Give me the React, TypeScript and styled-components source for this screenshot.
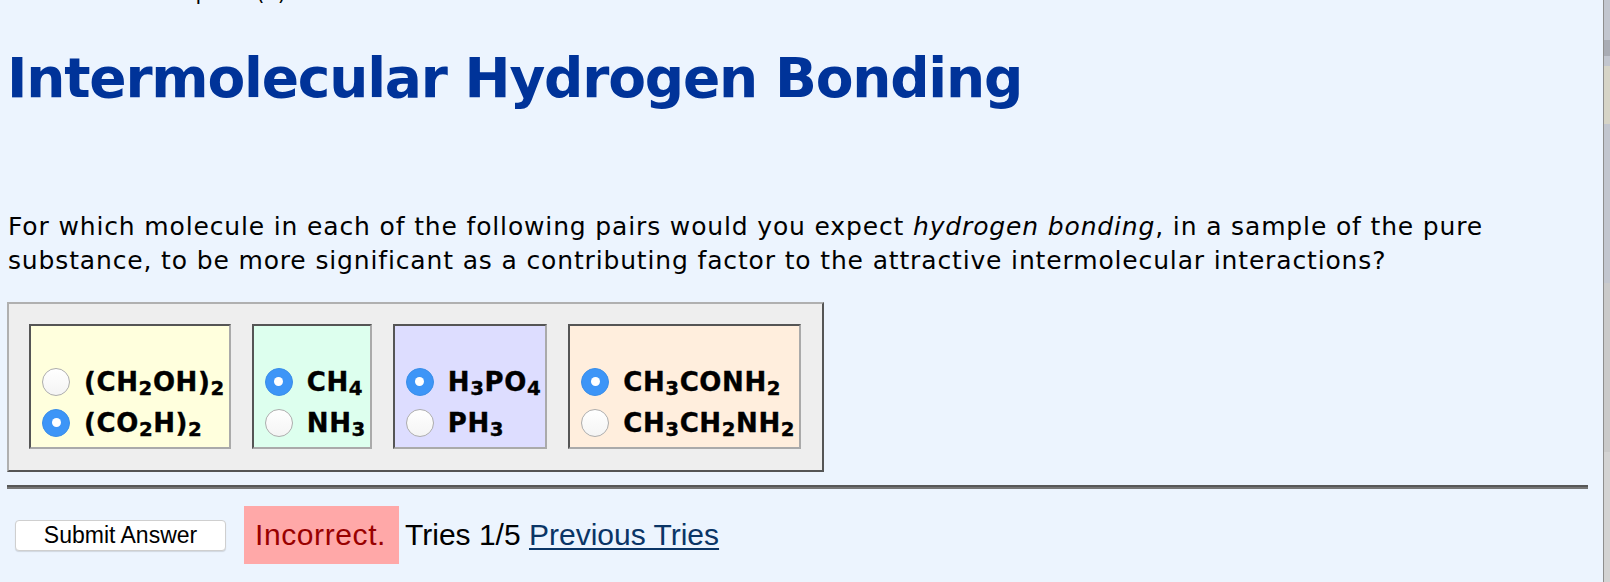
import React from "react";
import styled, { createGlobalStyle } from "styled-components";

const GlobalStyle = createGlobalStyle`
  html, body {
    margin: 0;
    padding: 0;
    background: #ecf4fe;
  }
  body {
    font-family: "DejaVu Sans", Verdana, sans-serif;
    color: #000;
    overflow: hidden;
  }
`;

const Frame = styled.div`
  display: flex;
  flex-direction: row;
  width: 1610px;
  height: 582px;
  overflow: hidden;
`;

const Main = styled.div`
  flex: 1;
  padding: 0 15px 0 7px;
  min-width: 0;
`;

const SideStrip = styled.div`
  width: 6px;
  border-left: 1px solid #8e8e8e;
  display: flex;
  flex-direction: column;
`;

const StripPart = styled.div<{ h: number; bg: string }>`
  height: ${(p) => p.h}px;
  background: ${(p) => p.bg};
`;

const CutLine = styled.div`
  height: 6px;
  overflow: hidden;
  font-size: 21px;
  line-height: 24px;
  span {
    display: block;
    margin-top: -19px;
    padding-left: 0;
  }
`;

const Title = styled.h1`
  margin: 40px 0 0 0;
  font-size: 55px;
  line-height: 65px;
  font-weight: bold;
  letter-spacing: -1.2px;
  color: #003399;
`;

const Question = styled.p`
  margin: 99px 0 0 0;
  font-size: 25px;
  line-height: 34px;
  letter-spacing: 0.85px;
  padding-left: 1px;
`;

const OptionsPanel = styled.div`
  display: inline-flex;
  gap: 21px;
  margin-top: 24px;
  padding: 20px 21px 21px 20px;
  background: #eeeeee;
  border: 2px solid;
  border-color: #b0b0b0 #555 #555 #b0b0b0;
`;

const PairCell = styled.div<{ bg: string }>`
  display: flex;
  flex-direction: column;
  padding: 35px 4px 4px 11px;
  background: ${(p) => p.bg};
  border: 2px solid;
  border-color: #555 #aaa #aaa #555;
`;

const OptionRow = styled.label`
  display: flex;
  align-items: center;
  height: 41px;
  gap: 14px;
  font-size: 26px;
  letter-spacing: 0.6px;
  font-weight: bold;
  -webkit-text-stroke: 0.35px #000;
  white-space: nowrap;
`;

const Radio = styled.span<{ checked: boolean }>`
  flex: none;
  width: 28px;
  height: 28px;
  box-sizing: border-box;
  border-radius: 50%;
  display: flex;
  align-items: center;
  justify-content: center;
  background: ${(p) => (p.checked ? "#3d95f7" : "linear-gradient(#ffffff, #f4f4f4)")};
  border: 1px solid ${(p) => (p.checked ? "#3a8ee8" : "#adadad")};
  &::after {
    content: "";
    display: ${(p) => (p.checked ? "block" : "none")};
    width: 9px;
    height: 9px;
    border-radius: 50%;
    background: #fff;
  }
`;

const Sub = styled.sub`
  font-size: 0.76em;
  vertical-align: -0.22em;
  line-height: 0;
`;

const Rule = styled.div`
  margin-top: 13px;
  border-top: 2px solid #575757;
  border-bottom: 2px solid #767676;
`;

const ResultBar = styled.div`
  display: flex;
  align-items: center;
  margin-top: 17px;
  padding-left: 8px;
  font-family: "Liberation Sans", Arial, sans-serif;
`;

const SubmitButton = styled.button`
  width: 211px;
  height: 31px;
  margin: 0 18px 0 0;
  padding: 0;
  background: #fff;
  border: 1px solid #cfcfcf;
  border-radius: 4px;
  box-shadow: 0 1px 1px rgba(0, 0, 0, 0.12);
  font-family: "Liberation Sans", Arial, sans-serif;
  font-size: 23px;
  color: #000;
`;

const Verdict = styled.span`
  background: #ffa8a8;
  color: #990000;
  font-size: 30px;
  line-height: 34px;
  letter-spacing: 0.6px;
  padding: 12px 13px 12px 11px;
`;

const Tries = styled.span`
  font-size: 30px;
  margin-left: 6px;
  white-space: pre;
`;

const TriesLink = styled.a`
  color: #0a3566;
  text-decoration: underline;
  text-decoration-thickness: 2px;
  text-underline-offset: 3px;
`;

type Option = { parts: (string | number)[]; checked: boolean };

const Formula = ({ parts }: { parts: (string | number)[] }) => (
  <span>
    {parts.map((p, i) =>
      typeof p === "number" ? <Sub key={i}>{p}</Sub> : <React.Fragment key={i}>{p}</React.Fragment>
    )}
  </span>
);

const pairs: { bg: string; options: Option[] }[] = [
  {
    bg: "#ffffdd",
    options: [
      { parts: ["(CH", 2, "OH)", 2], checked: false },
      { parts: ["(CO", 2, "H)", 2], checked: true },
    ],
  },
  {
    bg: "#ddffee",
    options: [
      { parts: ["CH", 4], checked: true },
      { parts: ["NH", 3], checked: false },
    ],
  },
  {
    bg: "#ddddff",
    options: [
      { parts: ["H", 3, "PO", 4], checked: true },
      { parts: ["PH", 3], checked: false },
    ],
  },
  {
    bg: "#ffeedd",
    options: [
      { parts: ["CH", 3, "CONH", 2], checked: true },
      { parts: ["CH", 3, "CH", 2, "NH", 2], checked: false },
    ],
  },
];

export default function App() {
  return (
    <Frame>
      <GlobalStyle />
      <Main>
        <CutLine>
          <span>Please answer all parts (1)</span>
        </CutLine>
        <Title>Intermolecular Hydrogen Bonding</Title>
        <Question>
          For which molecule in each of the following pairs would you expect <i>hydrogen bonding</i>, in a
          sample of the pure substance, to be more significant as a contributing factor to the attractive
          intermolecular interactions?
        </Question>
        <OptionsPanel>
          {pairs.map((pair, i) => (
            <PairCell bg={pair.bg} key={i}>
              {pair.options.map((opt, j) => (
                <OptionRow key={j}>
                  <Radio checked={opt.checked} />
                  <Formula parts={opt.parts} />
                </OptionRow>
              ))}
            </PairCell>
          ))}
        </OptionsPanel>
        <Rule />
        <ResultBar>
          <SubmitButton>Submit Answer</SubmitButton>
          <Verdict>Incorrect.</Verdict>
          <Tries>
            Tries 1/5 <TriesLink href="#">Previous Tries</TriesLink>
          </Tries>
        </ResultBar>
      </Main>
      <SideStrip>
        <StripPart h={40} bg="#c2c6cf" />
        <StripPart h={16} bg="#a9acb4" />
        <StripPart h={10} bg="#c2c6cf" />
        <StripPart h={58} bg="#d6d4c7" />
        <StripPart h={159} bg="#c2c6cf" />
        <StripPart h={169} bg="#cacaca" />
        <StripPart h={130} bg="#d3d3d3" />
      </SideStrip>
    </Frame>
  );
}
